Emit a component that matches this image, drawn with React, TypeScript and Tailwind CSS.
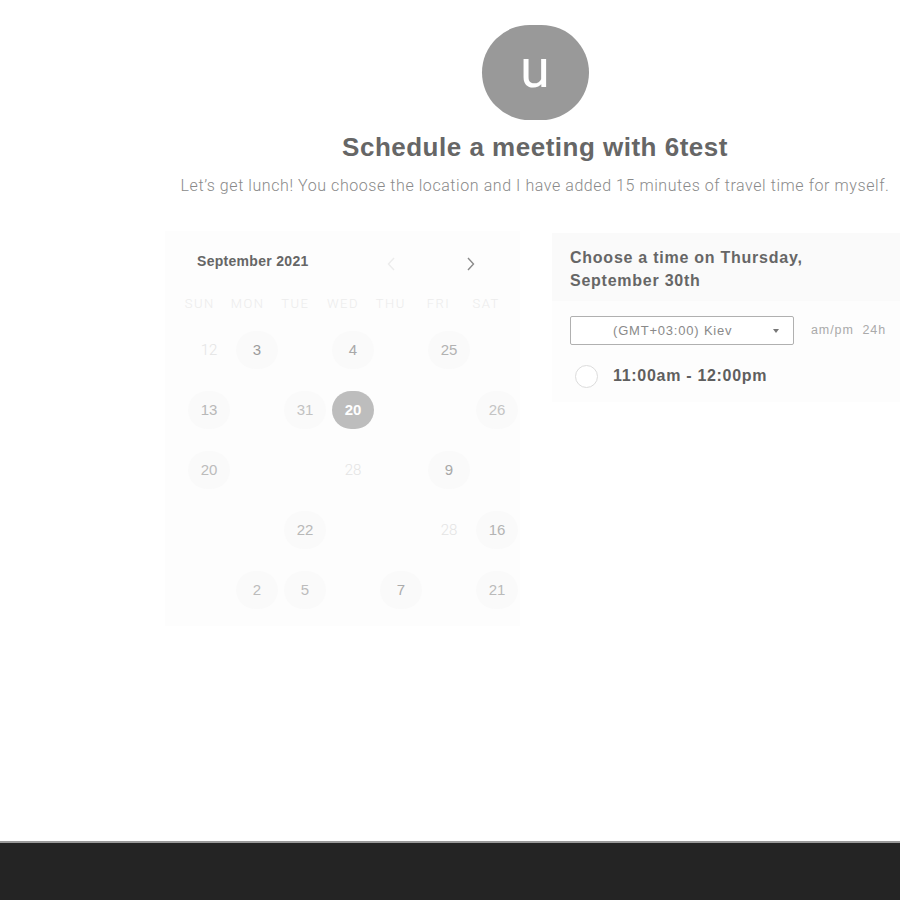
import React from 'react';

type Cell = { n?: string; kind?: 'day' | 'faint' | 'selected'; color?: string };

const rows: Cell[][] = [
  [{ n: '12', kind: 'faint' }, { n: '3', kind: 'day', color: 'text-[#9c9c9c]' }, {}, { n: '4', kind: 'day', color: 'text-[#a8a8a8]' }, {}, { n: '25', kind: 'day', color: 'text-[#b2b2b2]' }, {}],
  [{ n: '13', kind: 'day', color: 'text-[#b8b8b8]' }, {}, { n: '31', kind: 'day', color: 'text-[#c2c2c2]' }, { n: '20', kind: 'selected' }, {}, {}, { n: '26', kind: 'day', color: 'text-[#c4c4c4]' }],
  [{ n: '20', kind: 'day', color: 'text-[#bcbcbc]' }, {}, {}, { n: '28', kind: 'faint' }, {}, { n: '9', kind: 'day', color: 'text-[#a8a8a8]' }, {}],
  [{}, {}, { n: '22', kind: 'day', color: 'text-[#b8b8b8]' }, {}, {}, { n: '28', kind: 'faint' }, { n: '16', kind: 'day', color: 'text-[#b4b4b4]' }],
  [{}, { n: '2', kind: 'day', color: 'text-[#bcbcbc]' }, { n: '5', kind: 'day', color: 'text-[#bcbcbc]' }, {}, { n: '7', kind: 'day', color: 'text-[#ababab]' }, {}, { n: '21', kind: 'day', color: 'text-[#bababa]' }],
];

const weekdays = ['SUN', 'MON', 'TUE', 'WED', 'THU', 'FRI', 'SAT'];

function DayCell({ cell }: { cell: Cell }) {
  if (!cell.n) return <div className="h-[60px]" />;
  if (cell.kind === 'faint') {
    return (
      <div className="h-[60px] flex items-center justify-center">
        <span className="text-[15px] font-light text-[#e4e4e4] font-['Roboto',sans-serif]">{cell.n}</span>
      </div>
    );
  }
  if (cell.kind === 'selected') {
    return (
      <div className="h-[60px] flex items-center justify-center">
        <span className="w-[42px] h-[38px] rounded-full bg-[#bdbdbd] flex items-center justify-center text-[15px] font-bold text-white">
          {cell.n}
        </span>
      </div>
    );
  }
  return (
    <div className="h-[60px] flex items-center justify-center">
      <span className={`w-[42px] h-[38px] rounded-full bg-[#fafafa] flex items-center justify-center text-[15px] ${cell.color}`}>
        {cell.n}
      </span>
    </div>
  );
}

export default function App() {
  return (
    <div className="min-h-[900px] flex flex-col bg-white font-['Liberation_Sans',Arial,sans-serif]">
      <main className="flex-1">
        {/* Host header */}
        <div className="pl-[170px] pt-[25px] flex flex-col items-center">
          <div className="w-[107px] h-[95px] rounded-full bg-[#999999] flex items-center justify-center">
            <span className="text-[54px] leading-none text-white font-['Roboto',sans-serif] -mt-[8px]">u</span>
          </div>
          <h1 className="mt-[12px] text-[26px] leading-[30px] font-bold text-[#666666] tracking-[0.5px]">
            Schedule a meeting with 6test
          </h1>
          <p className="mt-[14px] text-[16px] leading-[20px] text-[#8a8a8a] font-['Roboto',sans-serif] font-light tracking-[0.57px] whitespace-nowrap">
            Let’s get lunch! You choose the location and I have added 15 minutes of travel time for myself.
          </p>
        </div>

        {/* Calendar + times */}
        <div className="mt-[35px] flex items-start">
          <section className="ml-[165px] w-[355px] bg-[#fdfdfd] pt-[15px] pb-[6px]">
            <div className="h-[30px] flex items-center pl-[32px]">
              <span className="text-[14px] font-semibold text-[#666666] tracking-[0.3px]">September 2021</span>
              <div className="ml-[78px] mt-[6px] flex items-center">
                <svg width="9" height="14" viewBox="0 0 9 14" fill="none" stroke="#ececec" strokeWidth="1.4">
                  <path d="M7 1 1.5 7 7 13" />
                </svg>
                <svg className="ml-[70px]" width="9" height="14" viewBox="0 0 9 14" fill="none" stroke="#8a8a8a" strokeWidth="1.4">
                  <path d="M2 1 7.5 7 2 13" />
                </svg>
              </div>
            </div>
            <div className="mt-[18px] ml-[11px] w-[334px] grid grid-cols-7 h-[20px] items-center">
              {weekdays.map((d) => (
                <span key={d} className="text-center text-[13px] tracking-[1.5px] text-[#ececec] font-light font-['Roboto',sans-serif]">
                  {d}
                </span>
              ))}
            </div>
            <div className="mt-[6px] ml-[20px] w-[336px] grid grid-cols-7">
              {rows.flat().map((c, i) => (
                <DayCell key={i} cell={c} />
              ))}
            </div>
          </section>

          <section className="ml-[32px] mt-[2px] flex-1 bg-[#fdfdfd]">
            <div className="bg-[#fafafa] pl-[18px] pt-[13px] pb-[9px]">
              <h2 className="text-[16px] leading-[23px] font-bold text-[#666666] tracking-[0.75px]">
                Choose a time on Thursday,
                <br />
                September 30th
              </h2>
            </div>
            <div className="pl-[18px] pt-[15px] pb-[14px]">
              <div className="flex items-center">
                <div className="w-[224px] h-[29px] border border-[#b0b0b0] rounded-[2px] bg-white flex items-center pl-[42px] pr-[14px]">
                  <span className="text-[13px] text-[#8a8a8a] tracking-[0.8px]">(GMT+03:00) Kiev</span>
                  <span className="ml-auto w-0 h-0 border-l-[3px] border-r-[3px] border-t-[4px] border-l-transparent border-r-transparent border-t-[#777]" />
                </div>
                <span className="ml-[17px] text-[12.5px] text-[#aaaaaa] tracking-[0.9px] whitespace-nowrap">am/pm&nbsp;&nbsp;24h</span>
              </div>
              <div className="mt-[19px] flex items-center">
                <span className="ml-[5px] w-[23px] h-[23px] rounded-full border border-[#dcdcdc] bg-white" />
                <span className="ml-[15px] text-[16px] font-semibold text-[#5f5f5f] tracking-[0.7px]">11:00am - 12:00pm</span>
              </div>
            </div>
          </section>
        </div>
      </main>
      <footer className="h-[59px] border-t-2 border-[#9a9a9a] bg-[#242424]" />
    </div>
  );
}
